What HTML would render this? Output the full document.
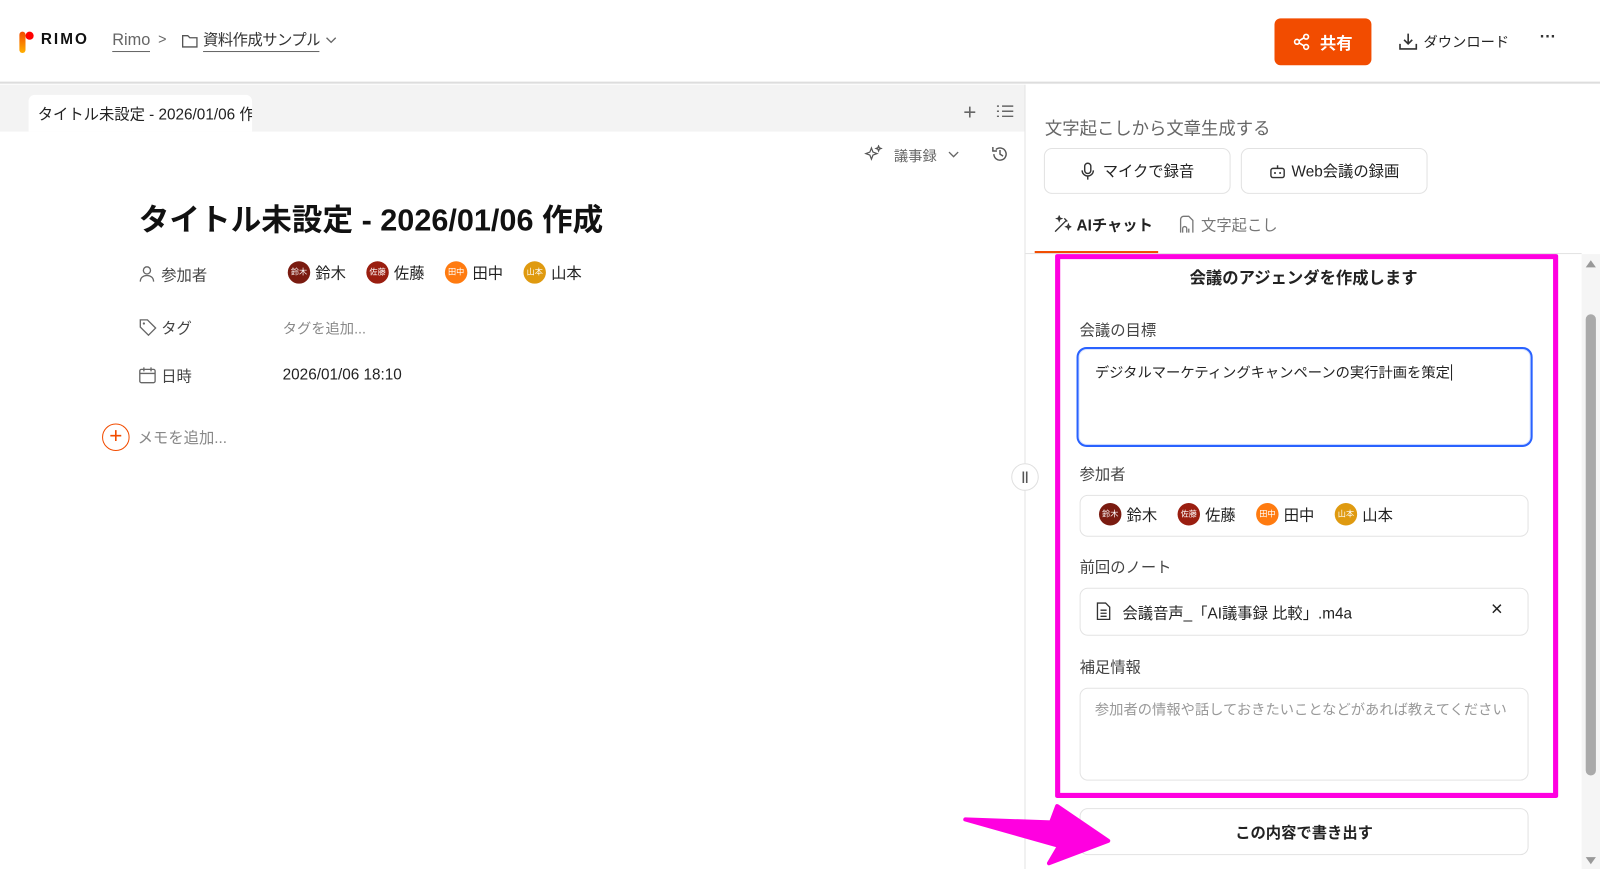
<!DOCTYPE html>
<html><head><meta charset="utf-8"><style>
*{box-sizing:border-box;margin:0;padding:0}
html,body{width:1600px;height:869px;overflow:hidden;background:#fff}
body{font-family:"Liberation Sans","Noto Sans CJK JP",sans-serif;color:#222;position:relative}
#w{position:absolute;left:0;top:0;width:1568px;height:852px;transform:scale(1.02041);transform-origin:0 0}
.a{position:absolute;white-space:nowrap}
.av{display:inline-block;width:22px;height:22px;border-radius:50%;color:#fff;font-size:8px;line-height:22px;text-align:center;vertical-align:middle;margin-right:5px}
.p{display:inline-flex;align-items:center;font-size:15px;margin-right:20px}
.lbl{font-size:15px;color:#444}
.btn{border:1px solid #e2e2e2;border-radius:8px;background:#fff;display:flex;align-items:center;justify-content:center;font-size:15px;color:#222}
</style></head><body><div id="w">
<div class="a" style="left:0;top:0;width:1568px;height:82px;border-bottom:2px solid #ddd;background:#fff"></div>
<div class="a" style="left:19px;top:31px;width:6px;height:21px;border-radius:3px;background:linear-gradient(#f24a00,#ffb000)"></div>
<div class="a" style="left:25px;top:31px;width:8px;height:8px;border-radius:50%;background:#f00"></div>
<div class="a" style="left:40px;top:30px;font-size:15px;font-weight:bold;letter-spacing:2px;color:#111">RIMO</div>
<div class="a" style="left:110px;top:30px;font-size:16px;color:#666;border-bottom:1px solid #666;line-height:20px">Rimo</div>
<div class="a" style="left:155px;top:30px;font-size:14px;color:#666">&gt;</div>
<svg class="a" style="left:178px;top:33px" width="16" height="14" viewBox="0 0 16 14"><path d="M1 2h5l2 2h7v9H1z" fill="none" stroke="#555" stroke-width="1.3"/></svg>
<div class="a" style="left:199px;top:30px;font-size:15px;letter-spacing:-0.5px;color:#333;border-bottom:1px solid #666;line-height:20px;width:114px;overflow:hidden">資料作成サンプル</div>
<svg class="a" style="left:319px;top:36px" width="11" height="8"><path d="M1 1l4.5 4.5L10 1" fill="none" stroke="#666" stroke-width="1.3"/></svg>
<div class="a" style="left:1249px;top:18px;width:95px;height:46px;border-radius:6px;background:#f24c00;color:#fff;font-weight:bold;font-size:16px;display:flex;align-items:center;justify-content:center">
<svg width="18" height="18" viewBox="0 0 18 18" style="margin-right:8px"><g fill="none" stroke="#fff" stroke-width="1.6"><circle cx="13" cy="4" r="2.3"/><circle cx="4" cy="9" r="2.3"/><circle cx="13" cy="14" r="2.3"/><path d="M6 8l5-3M6 10l5 3"/></g></svg>共有</div>
<svg class="a" style="left:1371px;top:32px" width="18" height="17"><path d="M9 1v10M5 7l4 4 4-4M1 11v5h16v-5" fill="none" stroke="#333" stroke-width="1.6"/></svg>
<div class="a" style="left:1395px;top:31px;font-size:14px;color:#222">ダウンロード</div>
<div class="a" style="left:1509px;top:28px;font-size:16px;font-weight:bold;color:#333">···</div>
<div class="a" style="left:0;top:83px;width:1004px;height:46px;background:#f3f3f3"></div>
<div class="a" style="left:28px;top:93px;width:219px;height:36px;background:#fff;border-radius:6px 6px 0 0;font-size:15px;padding:8px 0 0 9px;overflow:hidden">タイトル未設定 - 2026/01/06 作成</div>
<div class="a" style="left:944px;top:97px;font-size:22px;color:#666">+</div>
<svg class="a" style="left:976px;top:102px" width="18" height="15"><path d="M1 2h2M6 2h11M1 7h2M6 7h11M1 12h2M6 12h11" stroke="#666" stroke-width="1.4"/></svg>
<svg class="a" style="left:847px;top:142px" width="18" height="18"><path d="M7 3l1.5 4 4 1.5-4 1.5L7 14l-1.5-4-4-1.5 4-1.5zM14 1l.7 1.8 1.8.7-1.8.7L14 6l-.7-1.8-1.8-.7 1.8-.7z" fill="none" stroke="#555" stroke-width="1.2"/></svg>
<div class="a" style="left:876px;top:143px;font-size:14px;color:#666">議事録</div>
<svg class="a" style="left:929px;top:148px" width="11" height="8"><path d="M1 1l4.5 4.5L10 1" fill="none" stroke="#666" stroke-width="1.3"/></svg>
<svg class="a" style="left:971px;top:142px" width="18" height="18"><path d="M3 9a6 6 0 1 0 2-4.5M2 2v4h4M9 5v4l3 2" fill="none" stroke="#555" stroke-width="1.4"/></svg>
<div class="a" style="left:136px;top:191px;font-size:30px;font-weight:bold;color:#111">タイトル未設定 - 2026/01/06 作成</div>
<svg class="a" style="left:136px;top:260px" width="16" height="17"><circle cx="8" cy="5" r="3.5" fill="none" stroke="#666" stroke-width="1.3"/><path d="M1.5 16c0-4 3-6 6.5-6s6.5 2 6.5 6" fill="none" stroke="#666" stroke-width="1.3"/></svg>
<div class="a lbl" style="left:158px;top:259px">参加者</div>
<div class="a" style="left:282px;top:256px">
<span class="p"><span class="av" style="background:#7a1b10">鈴木</span>鈴木</span><span class="p"><span class="av" style="background:#9a1e10">佐藤</span>佐藤</span><span class="p"><span class="av" style="background:#ff7b10">田中</span>田中</span><span class="p"><span class="av" style="background:#df9a10">山本</span>山本</span></div>
<svg class="a" style="left:136px;top:312px" width="18" height="18"><path d="M1.5 1.5h7l8 8-7 7-8-8z" fill="none" stroke="#666" stroke-width="1.3"/><circle cx="5" cy="5" r="1.1" fill="#666"/></svg>
<div class="a lbl" style="left:158px;top:311px">タグ</div>
<div class="a" style="left:277px;top:312px;font-size:14px;color:#888">タグを追加...</div>
<svg class="a" style="left:136px;top:359px" width="17" height="17"><rect x="1" y="3" width="15" height="13" rx="1.5" fill="none" stroke="#666" stroke-width="1.3"/><path d="M1 7h15M5 1v4M12 1v4" stroke="#666" stroke-width="1.3"/></svg>
<div class="a lbl" style="left:158px;top:358px">日時</div>
<div class="a" style="left:277px;top:359px;font-size:15px;color:#222">2026/01/06 18:10</div>
<div class="a" style="left:100px;top:415px;width:27px;height:27px;border-radius:50%;border:1.5px solid #f24c00;color:#f24c00;font-size:22px;line-height:22px;text-align:center">+</div>
<div class="a" style="left:135px;top:418px;font-size:15px;color:#888">メモを追加...</div>
<div class="a" style="left:1004px;top:83px;width:1px;height:786px;background:#e3e3e3"></div>
<div class="a" style="left:991px;top:454px;width:27px;height:27px;border-radius:50%;background:#fff;border:1px solid #e0e0e0;font-size:12px;text-align:center;line-height:25px;color:#555;font-weight:bold">||</div>
<div class="a" style="left:1024px;top:112px;font-size:17px;color:#666">文字起こしから文章生成する</div>
<div class="a btn" style="left:1023px;top:145px;width:183px;height:45px"><svg width="14" height="18" style="margin-right:8px"><rect x="4" y="1" width="6" height="10" rx="3" fill="none" stroke="#333" stroke-width="1.4"/><path d="M1.5 8a5.5 5.5 0 0 0 11 0M7 13.5v3.5" fill="none" stroke="#333" stroke-width="1.4"/></svg>マイクで録音</div>
<div class="a btn" style="left:1216px;top:145px;width:183px;height:45px"><svg width="16" height="14" style="margin-right:6px"><rect x="1.5" y="4" width="13" height="9" rx="2" fill="none" stroke="#333" stroke-width="1.4"/><path d="M8 1v3" stroke="#333" stroke-width="1.4"/><circle cx="5.5" cy="8.5" r="1" fill="#333"/><circle cx="10.5" cy="8.5" r="1" fill="#333"/></svg>Web会議の録画</div>
<svg class="a" style="left:1032px;top:211px" width="18" height="18"><path d="M2 16L13 5M11 3l3 3M6 1l.6 1.6 1.6.6-1.6.6L6 5.4l-.6-1.6L3.8 3.2l1.6-.6zM15 9l.6 1.6 1.6.6-1.6.6L15 13.4l-.6-1.6-1.6-.6 1.6-.6z" fill="none" stroke="#333" stroke-width="1.3"/></svg>
<div class="a" style="left:1055px;top:210px;font-size:15px;font-weight:bold;color:#222">AIチャット</div>
<svg class="a" style="left:1154px;top:211px" width="16" height="18"><path d="M3 17V4a3 3 0 0 1 3-3h5l4 4v12M5 17v-4a2 2 0 0 1 4 0v4M11 17v-4" fill="none" stroke="#777" stroke-width="1.3"/></svg>
<div class="a" style="left:1177px;top:210px;font-size:15px;color:#777">文字起こし</div>
<div class="a" style="left:1005px;top:248px;width:545px;height:1px;background:#e3e3e3"></div>
<div class="a" style="left:1014px;top:246px;width:121px;height:2px;background:#f24c00"></div>
<div class="a" style="left:1550px;top:249px;width:18px;height:620px;background:#f5f5f5"></div>
<div class="a" style="left:1554px;top:255px;width:0;height:0;border-left:5px solid transparent;border-right:5px solid transparent;border-bottom:7px solid #999"></div>
<div class="a" style="left:1554px;top:308px;width:10px;height:452px;border-radius:5px;background:#aaa"></div>
<div class="a" style="left:1554px;top:840px;width:0;height:0;border-left:5px solid transparent;border-right:5px solid transparent;border-top:7px solid #999"></div>
<div class="a" style="left:1034px;top:249px;width:493px;height:533px;border:5px solid #ff00e0;border-radius:2px"></div>
<div class="a" style="left:1040px;top:259px;width:475px;text-align:center;font-size:16px;font-weight:bold;color:#222">会議のアジェンダを作成します</div>
<div class="a lbl" style="left:1058px;top:313px">会議の目標</div>
<div class="a" style="left:1055px;top:340px;width:447px;height:98px;border:2px solid #2962ff;border-radius:10px;box-shadow:inset 0 0 0 1px #d9e3ff;padding:13px 16px;font-size:14px;color:#222">デジタルマーケティングキャンペーンの実行計画を策定<span style="border-left:1px solid #222;margin-left:1px"></span></div>
<div class="a lbl" style="left:1058px;top:454px">参加者</div>
<div class="a" style="left:1058px;top:485px;width:440px;height:41px;border:1px solid #e3e3e3;border-radius:8px;padding:7px 0 0 18px">
<span class="p"><span class="av" style="background:#7a1b10">鈴木</span>鈴木</span><span class="p"><span class="av" style="background:#9a1e10">佐藤</span>佐藤</span><span class="p"><span class="av" style="background:#ff7b10">田中</span>田中</span><span class="p"><span class="av" style="background:#df9a10">山本</span>山本</span></div>
<div class="a lbl" style="left:1058px;top:545px">前回のノート</div>
<div class="a" style="left:1058px;top:576px;width:440px;height:47px;border:1px solid #e3e3e3;border-radius:8px"></div>
<svg class="a" style="left:1074px;top:590px" width="15" height="18"><path d="M1.5 1h8l4 4v12h-12z M4.5 8h6M4.5 11h6M4.5 14h6" fill="none" stroke="#333" stroke-width="1.3"/></svg>
<div class="a" style="left:1100px;top:590px;font-size:15px;color:#222">会議音声_「AI議事録 比較」.m4a</div>
<div class="a" style="left:1461px;top:586px;font-size:20px;color:#222">×</div>
<div class="a lbl" style="left:1058px;top:643px">補足情報</div>
<div class="a" style="left:1058px;top:674px;width:440px;height:91px;border:1px solid #e3e3e3;border-radius:8px;padding:10px 14px;font-size:14px;color:#999">参加者の情報や話しておきたいことなどがあれば教えてください</div>
<div class="a btn" style="left:1058px;top:792px;width:440px;height:46px;font-weight:bold;font-size:15px">この内容で書き出す</div>
<svg class="a" style="left:0;top:0" width="1568" height="852"><polygon points="946,803 1030,806 1036,790 1086,824 1028,846 1038,829" fill="#ff00e0" stroke="#ff00e0" stroke-width="4" stroke-linejoin="round"/></svg>
</div></body></html>
